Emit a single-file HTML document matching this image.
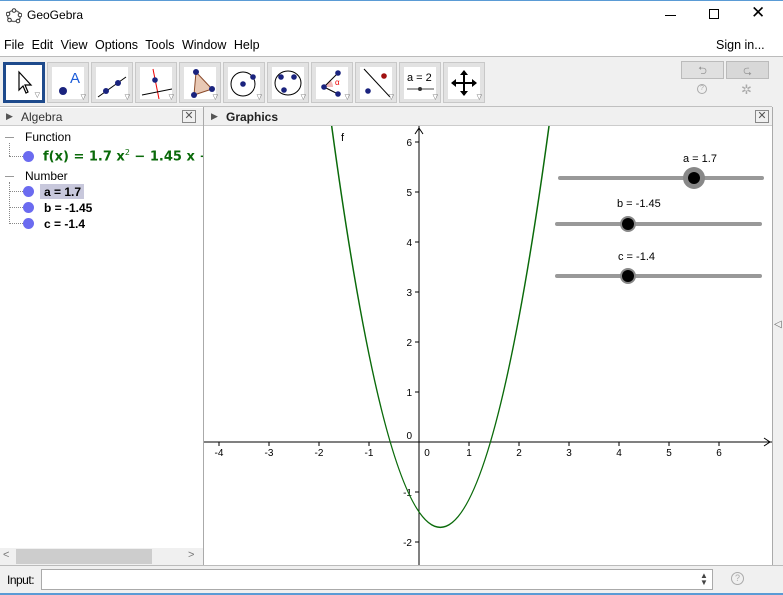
<!DOCTYPE html>
<html><head><style>
*{margin:0;padding:0;box-sizing:border-box}
body{width:783px;height:595px;overflow:hidden;background:#f0f0f0;font-family:"Liberation Sans",sans-serif;font-size:12px;color:#000;position:relative}
.abs{position:absolute}
.tb{position:absolute;top:62px;width:42px;height:41px;background:#e2e2e2;border:1px solid #c8c8c8}
.tb svg{position:absolute;left:4px;top:4px;width:32px;height:32px;background:#fff}
.tri{position:absolute;right:2px;bottom:1px;font-size:7px;color:#666}
</style></head><body>
<div class="abs" style="left:0;top:0;width:783px;height:31px;background:#fff;border-top:1px solid #5a9bd5"></div>
<svg class="abs" style="left:6px;top:8px" width="16" height="16"><ellipse cx="8" cy="8" rx="6.5" ry="5.5" fill="none" stroke="#666" stroke-width="1.3"/><g fill="#fff" stroke="#333" stroke-width="1"><circle cx="8" cy="2.5" r="1.8"/><circle cx="14" cy="7" r="1.8"/><circle cx="12" cy="13" r="1.8"/><circle cx="3.5" cy="12" r="1.8"/><circle cx="2" cy="6" r="1.8"/></g></svg>
<div class="abs" style="left:27px;top:8px;font-size:12px">GeoGebra</div>
<div class="abs" style="left:665px;top:15px;width:11px;height:1px;background:#000"></div>
<div class="abs" style="left:709px;top:9px;width:10px;height:10px;border:1px solid #000"></div>
<div class="abs" style="left:751px;top:3px;font-size:17px;font-weight:300">✕</div>
<div class="abs" style="left:0;top:31px;width:783px;height:26px;background:#fff;border-bottom:1px solid #bbb"></div>
<div class="abs" style="left:4px;top:38px;word-spacing:4px;font-size:12.5px">File Edit View Options Tools Window Help</div>
<div class="abs" style="left:716px;top:38px;font-size:12.5px">Sign in...</div>
<div class="abs" style="left:0;top:57px;width:772px;height:50px;background:#f0f0f0;border-bottom:1px solid #c0c0c0"></div>
<div class="tb" style="left:3px;border:3px solid #1e4a8c;background:#fff"><svg style="left:1px;top:1px" viewBox="0 0 32 32"><path d="M12 6 L12 24 L16 20 L19 27 L21 26 L18 19 L24 19 Z" fill="#fff" stroke="#000" stroke-width="1.2"/></svg><span class="tri">▽</span></div>
<div class="tb" style="left:47px"><svg viewBox="0 0 32 32"><circle cx="11" cy="24" r="4" fill="#1a237e"/><text x="18" y="16" fill="#1a5bd8" font-size="15" font-family="Liberation Sans">A</text></svg><span class="tri">▽</span></div>
<div class="tb" style="left:91px"><svg viewBox="0 0 32 32"><line x1="2" y1="30" x2="30" y2="10" stroke="#000"/><circle cx="10" cy="24" r="3" fill="#1a237e"/><circle cx="22" cy="16" r="3" fill="#1a237e"/></svg><span class="tri">▽</span></div>
<div class="tb" style="left:135px"><svg viewBox="0 0 32 32"><line x1="13" y1="2" x2="19" y2="32" stroke="#e00"/><line x1="2" y1="28" x2="32" y2="22" stroke="#000"/><circle cx="15" cy="13" r="2.8" fill="#1a237e"/></svg><span class="tri">▽</span></div>
<div class="tb" style="left:179px"><svg viewBox="0 0 32 32"><path d="M12 5 L28 22 L10 28Z" fill="#e8c8b4" stroke="#8a4a2a"/><circle cx="12" cy="5" r="3" fill="#1a237e"/><circle cx="28" cy="22" r="3" fill="#1a237e"/><circle cx="10" cy="28" r="3" fill="#1a237e"/></svg><span class="tri">▽</span></div>
<div class="tb" style="left:223px"><svg viewBox="0 0 32 32"><circle cx="15" cy="17" r="12" fill="none" stroke="#000"/><circle cx="15" cy="17" r="2.8" fill="#1a237e"/><circle cx="25" cy="10" r="2.8" fill="#1a237e"/></svg><span class="tri">▽</span></div>
<div class="tb" style="left:267px"><svg viewBox="0 0 32 32"><ellipse cx="16" cy="16" rx="13" ry="12" fill="none" stroke="#000"/><circle cx="9" cy="10" r="2.8" fill="#1a237e"/><circle cx="22" cy="10" r="2.8" fill="#1a237e"/><circle cx="12" cy="23" r="2.8" fill="#1a237e"/></svg><span class="tri">▽</span></div>
<div class="tb" style="left:311px"><svg viewBox="0 0 32 32"><path d="M8 20 L17 20 A9 9 0 0 0 14 13Z" fill="#f3b8b8"/><line x1="8" y1="20" x2="22" y2="6" stroke="#000"/><line x1="8" y1="20" x2="22" y2="27" stroke="#000"/><circle cx="8" cy="20" r="2.8" fill="#1a237e"/><circle cx="22" cy="6" r="2.8" fill="#1a237e"/><circle cx="22" cy="27" r="2.8" fill="#1a237e"/><text x="19" y="18" font-size="8" fill="#e00">α</text></svg><span class="tri">▽</span></div>
<div class="tb" style="left:355px"><svg viewBox="0 0 32 32"><line x1="4" y1="2" x2="30" y2="30" stroke="#000"/><circle cx="24" cy="9" r="2.8" fill="#a01010"/><circle cx="8" cy="24" r="2.8" fill="#1a237e"/></svg><span class="tri">▽</span></div>
<div class="tb" style="left:399px"><svg viewBox="0 0 32 32"><text x="3" y="14" font-size="11" font-family="Liberation Sans">a = 2</text><line x1="3" y1="22" x2="30" y2="22" stroke="#444"/><circle cx="16" cy="22" r="2" fill="#333"/></svg><span class="tri">▽</span></div>
<div class="tb" style="left:443px"><svg viewBox="0 0 32 32"><path d="M16 4 L16 28 M4 16 L28 16" stroke="#000" stroke-width="2"/><path d="M16 3 L12 8 L20 8Z M16 29 L12 24 L20 24Z M3 16 L8 12 L8 20Z M29 16 L24 12 L24 20Z" fill="#000"/></svg><span class="tri">▽</span></div>
<div class="abs" style="left:681px;top:61px;width:43px;height:18px;background:#e0e0e0;border:1px solid #bbb;color:#999;text-align:center;font-size:11px">⮌</div>
<div class="abs" style="left:726px;top:61px;width:43px;height:18px;background:#d8d8d8;border:1px solid #bbb;color:#999;text-align:center;font-size:11px">⮎</div>
<div class="abs" style="left:697px;top:84px;width:10px;height:10px;border:1px solid #aaa;border-radius:50%;font-size:7px;color:#aaa;text-align:center;line-height:8px">?</div>
<div class="abs" style="left:741px;top:82px;color:#aaa;font-size:13px">✲</div>
<div class="abs" style="left:0;top:107px;width:204px;height:458px;background:#fff;border-right:1px solid #aaa"></div>
<div class="abs" style="left:0;top:108px;width:203px;height:18px;background:#f0f0f0;border-bottom:1px solid #ccc"></div>
<div class="abs" style="left:6px;top:111px;font-size:9px;color:#555">▶</div>
<div class="abs" style="left:21px;top:110px;color:#333">Algebra</div>
<div class="abs" style="left:182px;top:110px;width:14px;height:13px;border:1px solid #888;font-size:11px;line-height:11px;text-align:center;color:#555">✕</div>
<div class="abs" style="left:204px;top:108px;width:568px;height:18px;background:#f0f0f0;border-bottom:1px solid #ccc"></div>
<div class="abs" style="left:211px;top:111px;font-size:9px;color:#555">▶</div>
<div class="abs" style="left:226px;top:110px;color:#222;font-weight:bold">Graphics</div>
<div class="abs" style="left:755px;top:110px;width:14px;height:13px;border:1px solid #888;font-size:11px;line-height:11px;text-align:center;color:#555">✕</div>
<div class="abs" style="left:5px;top:137px;width:9px;height:1px;background:#999"></div>
<div class="abs" style="left:25px;top:130px;font-size:12px">Function</div>
<div class="abs" style="left:9px;top:143px;width:1px;height:13px;border-left:1px dotted #888"></div>
<div class="abs" style="left:9px;top:156px;width:14px;border-top:1px dotted #888"></div>
<div class="abs" style="left:23px;top:151px;width:11px;height:11px;border-radius:50%;background:#6b6bf0"></div>
<div class="abs" style="left:43px;top:148px;color:#0a6a0a;font-weight:bold;font-size:13px;font-family:'DejaVu Sans',sans-serif;white-space:nowrap;width:160px;overflow:hidden">f(x) = 1.7 x<sup style="font-size:8px;font-weight:normal">2</sup> − 1.45 x −</div>
<div class="abs" style="left:5px;top:176px;width:9px;height:1px;background:#999"></div>
<div class="abs" style="left:25px;top:169px">Number</div>
<div class="abs" style="left:9px;top:182px;width:1px;height:42px;border-left:1px dotted #888"></div>
<div class="abs" style="left:9px;top:191px;width:14px;border-top:1px dotted #888"></div>
<div class="abs" style="left:9px;top:207px;width:14px;border-top:1px dotted #888"></div>
<div class="abs" style="left:9px;top:223px;width:14px;border-top:1px dotted #888"></div>
<div class="abs" style="left:40px;top:184px;width:44px;height:15px;background:#c8c8dc"></div>
<div class="abs" style="left:23px;top:186px;width:11px;height:11px;border-radius:50%;background:#6b6bf0"></div>
<div class="abs" style="left:23px;top:202px;width:11px;height:11px;border-radius:50%;background:#6b6bf0"></div>
<div class="abs" style="left:23px;top:218px;width:11px;height:11px;border-radius:50%;background:#6b6bf0"></div>
<div class="abs" style="left:44px;top:185px;font-weight:bold">a = 1.7</div>
<div class="abs" style="left:44px;top:201px;font-weight:bold">b = -1.45</div>
<div class="abs" style="left:44px;top:217px;font-weight:bold">c = -1.4</div>
<div class="abs" style="left:0;top:548px;width:203px;height:17px;background:#f0f0f0"></div>
<div class="abs" style="left:16px;top:549px;width:136px;height:15px;background:#cdcdcd"></div>
<div class="abs" style="left:3px;top:549px;color:#777;font-size:11px">&lt;</div>
<div class="abs" style="left:188px;top:549px;color:#777;font-size:11px">&gt;</div>
<svg class="abs" style="left:204px;top:126px" width="568" height="439" viewBox="204 126 568 439" font-family="Liberation Sans" font-size="10">
<rect x="204" y="126" width="568" height="439" fill="#fff"/>
<line x1="204" y1="442" x2="772" y2="442" stroke="#000"/>
<path d="M764 438 L770 442 L764 446" fill="none" stroke="#000"/>
<line x1="419" y1="126" x2="419" y2="565" stroke="#000"/>
<path d="M415 134 L419 128 L423 134" fill="none" stroke="#000"/>
<g stroke="#000">
<line x1="219" y1="442" x2="219" y2="446"/><line x1="269" y1="442" x2="269" y2="446"/><line x1="319" y1="442" x2="319" y2="446"/><line x1="369" y1="442" x2="369" y2="446"/><line x1="469" y1="442" x2="469" y2="446"/><line x1="519" y1="442" x2="519" y2="446"/><line x1="569" y1="442" x2="569" y2="446"/><line x1="619" y1="442" x2="619" y2="446"/><line x1="669" y1="442" x2="669" y2="446"/><line x1="719" y1="442" x2="719" y2="446"/>
<line x1="415" y1="142" x2="419" y2="142"/><line x1="415" y1="192" x2="419" y2="192"/><line x1="415" y1="242" x2="419" y2="242"/><line x1="415" y1="292" x2="419" y2="292"/><line x1="415" y1="342" x2="419" y2="342"/><line x1="415" y1="392" x2="419" y2="392"/><line x1="415" y1="492" x2="419" y2="492"/><line x1="415" y1="542" x2="419" y2="542"/>
</g>
<g text-anchor="middle"><text x="219" y="456">-4</text><text x="269" y="456">-3</text><text x="319" y="456">-2</text><text x="369" y="456">-1</text><text x="427" y="456">0</text><text x="469" y="456">1</text><text x="519" y="456">2</text><text x="569" y="456">3</text><text x="619" y="456">4</text><text x="669" y="456">5</text><text x="719" y="456">6</text></g>
<g text-anchor="end"><text x="412" y="146">6</text><text x="412" y="196">5</text><text x="412" y="246">4</text><text x="412" y="296">3</text><text x="412" y="346">2</text><text x="412" y="396">1</text><text x="412" y="439">0</text><text x="412" y="496">-1</text><text x="412" y="546">-2</text></g>
<path d="M329.8 112 Q440.3 942.7 550.9 112" fill="none" stroke="#0a6a0a" stroke-width="1.5"/>
<text x="341" y="141" font-size="11">f</text>
<g stroke="#999" stroke-width="4" stroke-linecap="round"><line x1="560" y1="178" x2="762" y2="178"/><line x1="557" y1="224" x2="760" y2="224"/><line x1="557" y1="276" x2="760" y2="276"/></g>
<circle cx="694" cy="178" r="11" fill="#888"/><circle cx="694" cy="178" r="6" fill="#000"/>
<circle cx="628" cy="224" r="8" fill="#888"/><circle cx="628" cy="224" r="6" fill="#000"/>
<circle cx="628" cy="276" r="8" fill="#888"/><circle cx="628" cy="276" r="6" fill="#000"/>
<g font-size="11"><text x="683" y="162">a = 1.7</text><text x="617" y="207">b = -1.45</text><text x="618" y="260">c = -1.4</text></g>
</svg>
<div class="abs" style="left:772px;top:107px;width:11px;height:458px;background:#f0f0f0;border-left:1px solid #aaa"></div>
<div class="abs" style="left:774px;top:319px;font-size:10px;color:#666">◁</div>
<div class="abs" style="left:0;top:565px;width:783px;height:28px;background:#f0f0f0;border-top:1px solid #bbb"></div>
<div class="abs" style="left:7px;top:573px;font-size:12px;letter-spacing:-0.5px">Input:</div>
<div class="abs" style="left:41px;top:569px;width:672px;height:21px;background:#fff;border:1px solid #aaa"></div>
<div class="abs" style="left:700px;top:572px;font-size:8px;line-height:7px;color:#444">▲<br>▼</div>
<div class="abs" style="left:731px;top:572px;width:13px;height:13px;border:1px solid #aaa;border-radius:50%;font-size:9px;color:#aaa;text-align:center;line-height:11px">?</div>
<div class="abs" style="left:0;top:593px;width:783px;height:2px;background:#5a9bd5"></div>
</body></html>
